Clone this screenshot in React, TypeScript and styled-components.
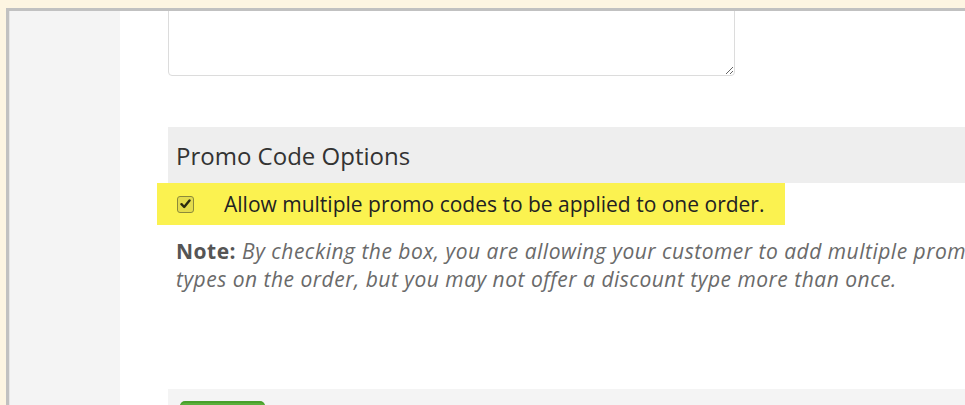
import styled, { createGlobalStyle } from 'styled-components';

const GlobalStyle = createGlobalStyle`
  html, body {
    margin: 0;
    padding: 0;
    height: 100%;
    overflow: hidden;
  }
  body {
    background: #fdf5e2;
    font-family: "Open Sans", "Liberation Sans", sans-serif;
  }
`;

function App() {
  return (
    <>
      <GlobalStyle />
      <Window>
        <Frame>
          <Sidebar />
          <Main>
            <Notes defaultValue="" />
            <SectionTitle>Promo Code Options</SectionTitle>
            <Highlight>
              <CheckBox aria-checked="true" role="checkbox">
                <svg width="11" height="10" viewBox="0 0 11 10">
                  <path d="M1.5 5.2 L4.2 8 L9.5 1.5" fill="none" stroke="#2b2b10" strokeWidth="2.4" strokeLinecap="round" strokeLinejoin="round" />
                </svg>
              </CheckBox>
              <Label>Allow multiple promo codes to be applied to one order.</Label>
            </Highlight>
            <Note>
              <strong>Note:</strong>{' '}
              <em>
                By checking the box, you are allowing your customer to add multiple promo code discount
                <br />
                types on the order, but you may not offer a discount type more than once.
              </em>
            </Note>
            <Footer>
              <SaveButton />
            </Footer>
          </Main>
        </Frame>
      </Window>
    </>
  );
}

export default App;

const Window = styled.div`
  height: 100vh;
  padding: 8px 0 0 6px;
  box-sizing: border-box;
`;

const Frame = styled.div`
  height: 100%;
  border-top: 3px solid #c1c1c1;
  border-left: 3px solid #c1c1c1;
  box-sizing: border-box;
  display: grid;
  grid-template-columns: 111px 1fr;
  overflow: hidden;
  background: #ffffff;
`;

const Sidebar = styled.div`
  background: #f4f4f4;
  border-left: 1px solid #e6e6e6;
`;

const Main = styled.div`
  padding-left: 48px;
  display: flex;
  flex-direction: column;
  min-width: 0;
  overflow: hidden;
`;

const Notes = styled.textarea`
  width: 567px;
  height: 100px;
  margin-top: -35px;
  box-sizing: border-box;
  border: 1px solid #dcdcdc;
  border-radius: 4px;
  outline: none;
  font-family: inherit;
  flex-shrink: 0;
`;

const SectionTitle = styled.div`
  margin-top: 51px;
  height: 56px;
  display: flex;
  align-items: center;
  padding-left: 8px;
  background: #eeeeee;
  color: #333333;
  font-size: 24px;
  flex-shrink: 0;
`;

const Highlight = styled.div`
  align-self: flex-start;
  margin-left: -11px;
  height: 42px;
  display: flex;
  align-items: center;
  padding: 0 21px 0 20px;
  background: #fbf250;
  flex-shrink: 0;
`;

const CheckBox = styled.span`
  width: 17px;
  height: 17px;
  box-sizing: border-box;
  border: 1px solid #8c8a3a;
  border-radius: 3px;
  background: #e4dc4c;
  display: flex;
  align-items: center;
  justify-content: center;
  margin-right: 30px;
`;

const Label = styled.span`
  font-size: 21px;
  color: #222222;
`;

const Note = styled.p`
  margin: 12px 0 0 8px;
  font-size: 21px;
  letter-spacing: 0.5px;
  line-height: 28px;
  color: #6a6a6a;
  white-space: nowrap;
  strong {
    color: #555555;
    font-weight: 700;
  }
  em {
    font-style: italic;
  }
`;

const Footer = styled.div`
  margin-top: 96px;
  height: 60px;
  background: #f4f4f4;
  padding: 12px 0 0 12px;
  flex-shrink: 0;
`;

const SaveButton = styled.div`
  width: 85px;
  height: 34px;
  border-radius: 5px;
  background: #5aae3a;
  border-top: 2px solid #48a02a;
  box-sizing: border-box;
`;
